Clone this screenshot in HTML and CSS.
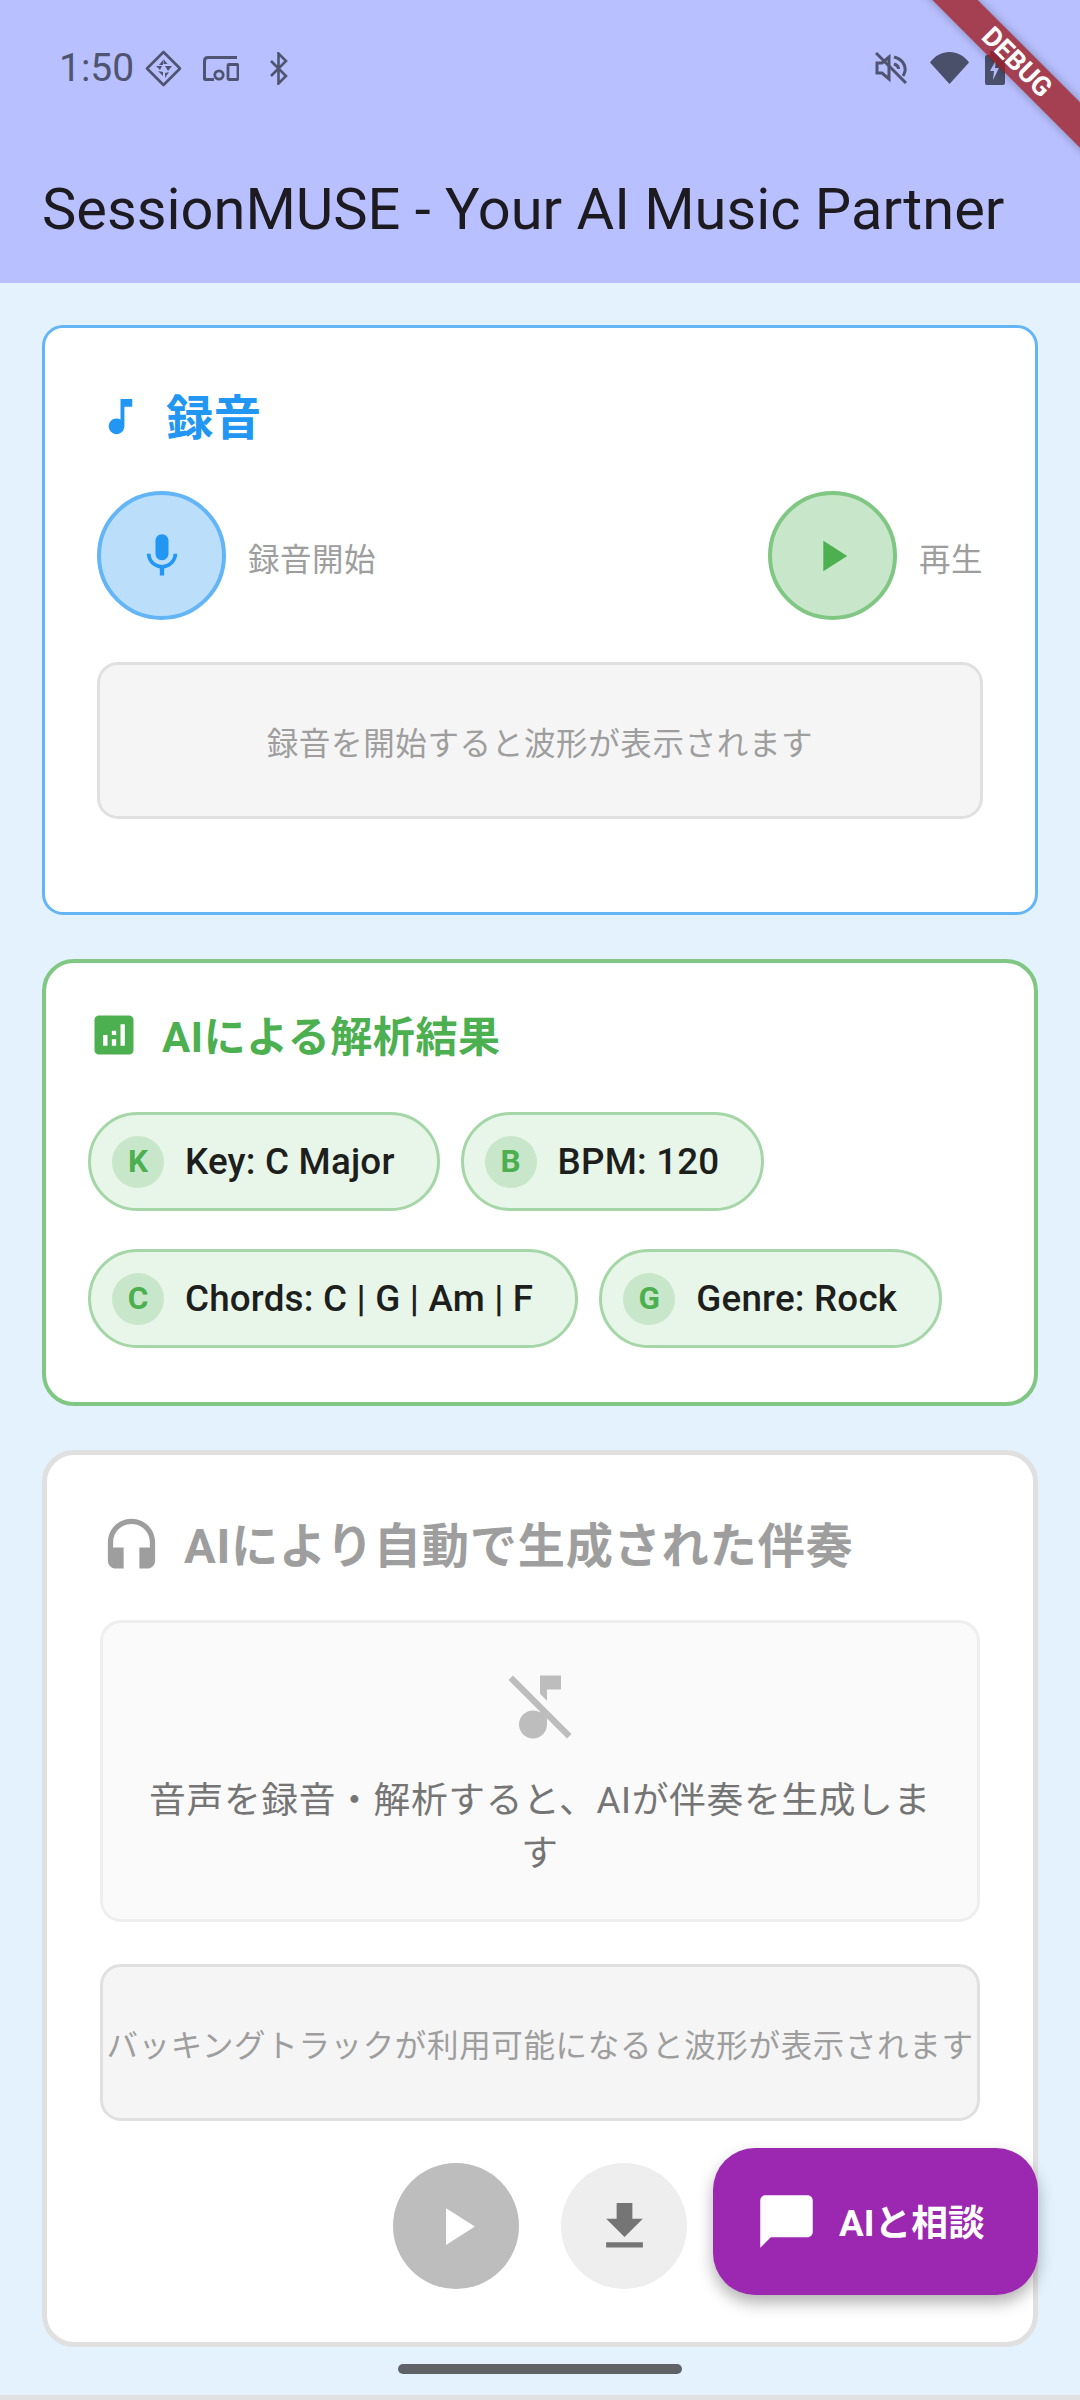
FILE: index.html
```html
<!DOCTYPE html>
<html lang="ja">

<head>
  <title>SessionMUSE</title>
  <link rel="stylesheet" href="styles.css">
</head>

<body>
  <header class="app-bar">
    <div class="status-bar">
      <div class="status-left">
        <span class="clock">1:50</span>
        <svg class="st-diamond" viewBox="0 0 37 37">
          <path d="M18.5 2 35 18.5 18.5 35 2 18.5z" fill="none" stroke="#4f5470" stroke-width="2.6" stroke-linejoin="round" />
          <path d="M18.5 9l4 5h-4zM18 10l-4 5h4zM11 16h6l-2 4zM20 16h7l-4 5zM13 21l5 1v4zM20 23l4-1-4 6z" fill="#4f5470" />
        </svg>
        <svg class="st-devices" viewBox="0 0 36 25">
          <path d="M34 1.5H5Q1.5 1.500 1.500 5v17.500a1 1 0 0 0 1 1H11" fill="none" stroke="#4f5470" stroke-width="3" />
          <circle cx="16" cy="19" r="4.200" fill="none" stroke="#4f5470" stroke-width="2.800" />
          <rect x="25" y="8.500" width="10" height="15" rx="1" fill="none" stroke="#4f5470" stroke-width="2.800" />
        </svg>
        <svg class="st-bt" viewBox="0 0 18 33">
          <path d="M1 9l15 15-7.500 7.500v-30L16 9 1 24" fill="none" stroke="#4f5470" stroke-width="2.600" />
        </svg>
      </div>
      <div class="status-right">
        <svg class="st-mute" viewBox="0 0 32 32">
          <path d="M2 11h5l7 -6v22l-7-6H2z" fill="none" stroke="#4f5470" stroke-width="3" />
          <path d="M19 5c8 2 12 8 11 14-.4 2-1 3.500-2 5M19 12c3 1 4.500 3 4.500 5" fill="none" stroke="#4f5470" stroke-width="3" />
          <path d="M1 1l30 30" stroke="#4f5470" stroke-width="3" />
        </svg>
        <svg class="st-wifi" viewBox="0 0 39 32">
          <path d="M0 10.500C5 3.500 12 0 19.500 0S34 3.500 39 10.500L19.500 32z" fill="#4a4f6a" />
        </svg>
        <svg class="st-battery" viewBox="0 0 20 34">
          <path d="M5 4V0h10v4h3q2 0 2 2v26q0 2-2 2H2q-2 0-2-2V6q0-2 2-2z" fill="#4a4f6a" />
          <path d="M11 9 5 20h4l-1 9 6-12h-4z" fill="#b8c0ff" />
        </svg>
      </div>
    </div>
    <h1 class="app-title">SessionMUSE - Your AI Music Partner</h1>
  </header>

  <main class="content">
    <section class="card card-record">
      <div class="card-title title-blue">
        <svg class="icon-47" viewBox="0 0 24 24"><path d="M12 3v10.550c-.59-.34-1.270-.55-2-.55-2.210 0-4 1.790-4 4s1.790 4 4 4 4-1.790 4-4V7h4V3h-6z" /></svg>
        <span>録音</span>
      </div>
      <div class="record-row">
        <div class="record-item">
          <div class="round-btn btn-blue">
            <svg class="icon-52" viewBox="0 0 24 24"><path d="M12 14c1.660 0 2.990-1.340 2.990-3L15 5c0-1.660-1.340-3-3-3S9 3.340 9 5v6c0 1.660 1.340 3 3 3zm5.300-3c0 3-2.540 5.100-5.300 5.100S6.700 14 6.700 11H5c0 3.410 2.720 6.230 6 6.720V21h2v-3.280c3.280-.48 6-3.300 6-6.720h-1.700z" /></svg>
          </div>
          <span class="record-label">録音開始</span>
        </div>
        <div class="record-item">
          <div class="round-btn btn-green">
            <svg class="icon-52" viewBox="0 0 24 24"><path d="M8 5v14l11-7z" /></svg>
          </div>
          <span class="record-label">再生</span>
        </div>
      </div>
      <div class="wave-box">録音を開始すると波形が表示されます</div>
    </section>

    <section class="card card-analysis">
      <div class="card-title title-green">
        <svg class="icon-52" viewBox="0 0 24 24"><path d="M19 3H5c-1.100 0-2 .9-2 2v14c0 1.100.9 2 2 2h14c1.100 0 2-.9 2-2V5c0-1.100-.9-2-2-2zM9 17H7v-5h2v5zm4 0h-2v-3h2v3zm0-5h-2v-2h2v2zm4 5h-2V7h2v10z" /></svg>
        <span>AIによる解析結果</span>
      </div>
      <div class="chips">
        <div class="chip"><span class="chip-avatar">K</span>Key: C Major</div>
        <div class="chip"><span class="chip-avatar">B</span>BPM: 120</div>
        <div class="chip"><span class="chip-avatar">C</span>Chords: C | G | Am | F</div>
        <div class="chip"><span class="chip-avatar">G</span>Genre: Rock</div>
      </div>
    </section>

    <section class="card card-backing">
      <div class="card-title title-grey">
        <svg class="icon-63" viewBox="0 0 24 24"><path d="M12 1c-4.970 0-9 4.030-9 9v7c0 1.660 1.340 3 3 3h3v-8H5v-2c0-3.870 3.130-7 7-7s7 3.130 7 7v2h-4v8h3c1.660 0 3-1.340 3-3v-7c0-4.970-4.030-9-9-9z" /></svg>
        <span>AIにより自動で生成された伴奏</span>
      </div>
      <div class="empty-box">
        <svg class="icon-84" viewBox="0 0 24 24"><path d="M4.270 3 3 4.270l9 9v.28c-.59-.34-1.270-.55-2-.55-2.210 0-4 1.790-4 4s1.790 4 4 4 4-1.790 4-4v-1.730L19.730 21 21 19.730 4.270 3zM14 7h4V3h-6v5.180l2 2z" /></svg>
        <p class="empty-text">音声を録音・解析すると、AIが伴奏を生成します</p>
      </div>
      <div class="wave-box wave-backing">バッキングトラックが利用可能になると波形が表示されます</div>
      <div class="actions">
        <div class="action-btn action-play">
          <svg class="icon-63" viewBox="0 0 24 24"><path d="M8 5v14l11-7z" /></svg>
        </div>
        <div class="action-btn action-download">
          <svg class="icon-63" viewBox="0 0 24 24"><path d="M19 9h-4V3H9v6H5l7 7 7-7zM5 18v2h14v-2H5z" /></svg>
        </div>
      </div>
    </section>
  </main>

  <div class="home-bar"><span class="home-pill"></span></div>

  <button class="fab">
    <svg class="icon-63" viewBox="0 0 24 24"><path d="M20 2H4c-1.100 0-2 .9-2 2v18l4-4h14c1.100 0 2-.9 2-2V4c0-1.100-.9-2-2-2z" /></svg>
    <span>AIと相談</span>
  </button>

  <div class="debug-corner">
    <div class="debug-banner">DEBUG</div>
  </div>
</body>

</html>
```

FILE: styles.css
```css
* {
  box-sizing: border-box;
}

html,
body {
  margin: 0;
  height: 2400px;
}

body {
  position: relative;
  display: flex;
  flex-direction: column;
  width: 1080px;
  overflow: hidden;
  background-color: #e3f2fd;
  font-family: Roboto, "Noto Sans CJK JP", sans-serif;
}

svg {
  display: block;
  flex-shrink: 0;
  fill: currentColor;
}

.icon-47 {
  width: 47px;
  height: 47px;
}

.icon-52 {
  width: 52px;
  height: 52px;
}

.icon-63 {
  width: 63px;
  height: 63px;
}

.icon-84 {
  width: 84px;
  height: 84px;
}

/* app bar */
.app-bar {
  height: 283px;
  background-color: #b8c0ff;
}

.status-bar {
  display: flex;
  justify-content: space-between;
  align-items: center;
  height: 136px;
  padding: 0 75px 0 59px;
}

.status-left,
.status-right {
  display: flex;
  align-items: center;
}

.clock {
  width: 86px;
  font-size: 39px;
  color: #4f5470;
}

.st-diamond {
  width: 37px;
  height: 37px;
}

.st-devices {
  width: 36px;
  height: 25px;
  margin-left: 21px;
}

.st-bt {
  width: 18px;
  height: 33px;
  margin-left: 31px;
}

.st-mute {
  width: 32px;
  height: 32px;
}

.st-wifi {
  width: 39px;
  height: 32px;
  margin-left: 23px;
}

.st-battery {
  width: 20px;
  height: 34px;
  margin-left: 16px;
}

.app-title {
  margin: 0;
  padding-left: 42px;
  font-size: 57.75px;
  font-weight: 400;
  line-height: 147px;
  color: #1d1b20;
  white-space: nowrap;
}

/* cards */
.content {
  flex: 1;
  display: flex;
  flex-direction: column;
  gap: 44px;
  padding: 42px 42px 0;
}

.card {
  background-color: white;
  border-style: solid;
}

.card-title {
  display: flex;
  align-items: center;
  font-weight: 700;
  letter-spacing: 0.6px;
}

.card-record {
  height: 590px;
  padding: 63px 52px 0;
  border-width: 3px;
  border-color: #64b5f6;
  border-radius: 21px;
}

.title-blue {
  gap: 22px;
  height: 50px;
  margin-bottom: 50px;
  font-size: 47.25px;
  color: #2196f3;
}

.title-blue span {
  padding-bottom: 3px;
}

.record-row {
  display: flex;
  justify-content: space-between;
  margin-bottom: 43px;
}

.record-item {
  display: flex;
  align-items: center;
  gap: 22px;
}

.record-label {
  padding-top: 2px;
  font-size: 31.5px;
  letter-spacing: 0.5px;
  color: #9e9e9e;
}

.round-btn {
  display: flex;
  align-items: center;
  justify-content: center;
  width: 129px;
  height: 129px;
  border-radius: 50%;
  border: 4px solid;
}

.btn-blue {
  background-color: #bbdefb;
  border-color: #64b5f6;
  color: #2196f3;
}

.btn-green {
  background-color: #c8e6c9;
  border-color: #81c784;
  color: #4caf50;
}

.wave-box {
  display: flex;
  align-items: center;
  justify-content: center;
  height: 157px;
  background-color: #f5f5f5;
  border: 3px solid #e0e0e0;
  border-radius: 21px;
  font-size: 31.5px;
  letter-spacing: 0.65px;
  color: #9e9e9e;
  white-space: nowrap;
}

.record-row + .wave-box {
  margin-top: -1px;
}

.card-analysis {
  height: 447px;
  padding: 46px 42px 0;
  border-width: 4px;
  border-color: #81c784;
  border-radius: 32px;
}

.title-green {
  gap: 22px;
  height: 52px;
  margin-bottom: 51px;
  font-size: 42px;
  color: #4caf50;
}

.title-green span {
  padding-bottom: 3px;
}

.chips {
  display: flex;
  flex-wrap: wrap;
  gap: 38px 21px;
}

.chip {
  display: flex;
  align-items: center;
  gap: 21px;
  height: 99px;
  padding: 0 42px 0 21px;
  background-color: #e8f5e9;
  border: 3px solid #a5d6a7;
  border-radius: 50px;
  font-size: 36.75px;
  font-weight: 500;
  letter-spacing: 0.2px;
  color: #1c1f1c;
}

.chip-avatar {
  display: flex;
  align-items: center;
  justify-content: center;
  width: 52px;
  height: 52px;
  background-color: #c8e6c9;
  border-radius: 50%;
  font-size: 31.5px;
  font-weight: 700;
  letter-spacing: 0;
  color: #4caf50;
}

.card-backing {
  height: 897px;
  padding: 61px 53px 0;
  border-width: 5px;
  border-color: #e0e0e0;
  border-radius: 32px;
}

.title-grey {
  gap: 21px;
  height: 63px;
  margin-bottom: 41px;
  font-size: 47.25px;
  letter-spacing: 0.7px;
  color: #9e9e9e;
  white-space: nowrap;
}

.title-grey span {
  padding-bottom: 10px;
}

.empty-box {
  display: flex;
  flex-direction: column;
  align-items: center;
  height: 302px;
  padding: 42px 42px 0;
  background-color: #fafafa;
  border: 3px solid #eeeeee;
  border-radius: 21px;
  color: #bdbdbd;
}

.empty-text {
  margin: 25px 0 0;
  font-size: 36.75px;
  letter-spacing: 0.65px;
  line-height: 53px;
  text-align: center;
  color: #757575;
}

.wave-backing {
  margin-top: 42px;
}

.actions {
  display: flex;
  justify-content: center;
  gap: 42px;
  margin-top: 42px;
}

.action-btn {
  display: flex;
  align-items: center;
  justify-content: center;
  width: 126px;
  height: 126px;
  border-radius: 50%;
}

.action-play {
  background-color: #bdbdbd;
  color: white;
}

.action-download {
  background-color: #eeeeee;
  color: #757575;
}

/* bottom */
.home-bar {
  display: flex;
  justify-content: center;
  height: 53px;
  padding-top: 17px;
  border-bottom: 5px solid #e0e0e0;
}

.home-pill {
  width: 284px;
  height: 10px;
  background-color: #5f6368;
  border-radius: 5px;
}

.fab {
  position: absolute;
  left: 713px;
  top: 2148px;
  display: flex;
  align-items: center;
  gap: 21px;
  width: 325px;
  height: 147px;
  padding: 0 0 0 42px;
  background-color: #9c27b0;
  border: none;
  border-radius: 42px;
  box-shadow: 0 8px 16px rgba(0, 0, 0, 0.3);
  font-family: inherit;
  font-size: 36.75px;
  font-weight: 700;
  color: white;
}

.fab span {
  padding-bottom: 3px;
}

.debug-corner {
  position: absolute;
  top: 0;
  right: 0;
  width: 170px;
  height: 170px;
  overflow: hidden;
}

.debug-banner {
  position: absolute;
  left: -60px;
  top: 46px;
  width: 334px;
  height: 32px;
  background-color: rgba(160, 28, 35, 0.78);
  box-shadow: 0 0 10px rgba(0, 0, 0, 0.3);
  transform: rotate(45deg);
  font-size: 27px;
  font-weight: 700;
  line-height: 32px;
  text-align: center;
  color: white;
}
```
